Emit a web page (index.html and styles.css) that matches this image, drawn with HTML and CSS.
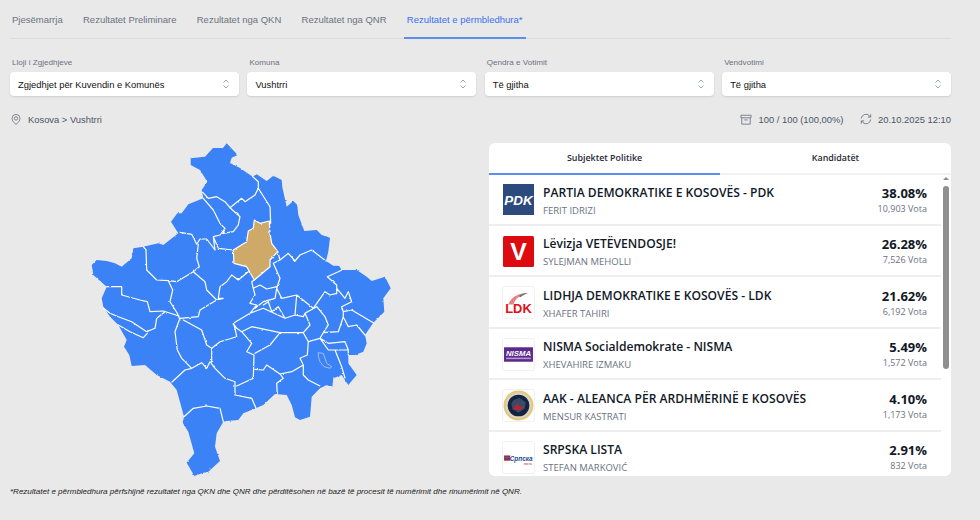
FILE: index.html
```html
<!DOCTYPE html>
<html lang="sq">
<head>
<meta charset="utf-8">
<title>Rezultatet</title>
<link rel="stylesheet" href="styles.css">
</head>
<body>
<div class="page">
  <nav class="tabs">
    <a class="tab">Pjesëmarrja</a>
    <a class="tab">Rezultatet Preliminare</a>
    <a class="tab">Rezultatet nga QKN</a>
    <a class="tab">Rezultatet nga QNR</a>
    <a class="tab active">Rezultatet e përmbledhura*</a>
  </nav>

  <section class="filters">
    <div class="field"><span class="label">Lloji i Zgjedhjeve</span><div class="select"><span>Zgjedhjet për Kuvendin e Komunës</span><svg class="updown" viewBox="0 0 8 12"><path d="M1.500 4.500 4 2l2.500 2.500M1.500 7.500 4 10l2.500-2.500"/></svg></div></div>
    <div class="field"><span class="label">Komuna</span><div class="select"><span>Vushtrri</span><svg class="updown" viewBox="0 0 8 12"><path d="M1.500 4.500 4 2l2.500 2.500M1.500 7.500 4 10l2.500-2.500"/></svg></div></div>
    <div class="field"><span class="label">Qendra e Votimit</span><div class="select"><span>Të gjitha</span><svg class="updown" viewBox="0 0 8 12"><path d="M1.500 4.500 4 2l2.500 2.500M1.500 7.500 4 10l2.500-2.500"/></svg></div></div>
    <div class="field"><span class="label">Vendvotimi</span><div class="select"><span>Të gjitha</span><svg class="updown" viewBox="0 0 8 12"><path d="M1.500 4.500 4 2l2.500 2.500M1.500 7.500 4 10l2.500-2.500"/></svg></div></div>
  </section>

  <section class="status">
    <div class="crumb">
      <svg class="ico pin" viewBox="0 0 12 14"><path d="M6 13C3.500 10.500 1.200 8.500 1.200 5.700a4.800 4.800 0 0 1 9.600 0C10.800 8.500 8.500 10.500 6 13Z"/><circle cx="6" cy="5.700" r="2"/></svg>
      <span>Kosova &gt; Vushtrri</span>
    </div>
    <div class="meta">
      <span class="meta-item"><svg class="ico box" viewBox="0 0 14 13"><path d="M1 1.500h12v3H1zM2 4.500v7.500h10V4.500M5 7h4"/></svg>100 / 100 (100,00%)</span>
      <span class="meta-item"><svg class="ico sync" viewBox="0 0 14 14"><path d="M1.500 6.500A5.500 5.500 0 0 1 11 3.200L12.500 4.800M12.500 1.500v3.300H9.200M12.500 7.500A5.500 5.500 0 0 1 3 10.800L1.500 9.200M1.500 12.500V9.200h3.300"/></svg>20.10.2025 12:10</span>
    </div>
  </section>

  <main class="content">
    <div class="map-col">
      <svg class="map" viewBox="0 140 479 340">
        <defs>
          <filter id="rough" x="-5%" y="-5%" width="110%" height="110%">
            <feTurbulence type="fractalNoise" baseFrequency="0.25" numOctaves="2" seed="4"/>
            <feDisplacementMap in="SourceGraphic" scale="2" xChannelSelector="R" yChannelSelector="G"/>
          </filter>
        </defs>
        <g class="rough-layer">
        <path class="land" d="M190.700 158.300 205 156.700 213 148 223 148 226.700 143.300 237.700 155 231.700 157.700 230 163 240 168 252.700 176.700 256.700 174.300 266.700 181 273.300 175.700 281.700 180 282.300 187 286.700 206.700 293.300 201 297.300 205 298.300 215 304.300 231 316.700 230 321.700 235 330 237.700 328.300 251.700 326 261 333.300 265.700 339 265.700 341.700 270 351.700 270 356.700 270 366.700 276.700 371.700 281 385 276.700 390.700 288.300 383.300 298.300 384.300 311.700 373.300 322.700 365 335 366.700 343.300 363.300 351.700 355 355 348.300 355 348.300 363.300 356.700 375 348.300 385 341.700 375 333.300 378.300 332.300 387.300 326.700 385 320 388.300 311.700 396.700 310 416.700 300 420 295 417.300 291.700 405 286.700 395 275 394 263.300 405 253.300 409.300 243.300 413.300 238.300 420 226.700 421 223.300 421.700 216.700 433.300 215 446.700 220 461 208.300 471.700 203.300 472.700 194.300 476 186.700 462.700 194.300 453.300 188.300 431.700 182.700 422.700 184 416.700 176.700 390 170 381.700 156.700 375 145 365 131.700 366 129.300 355 124 346.700 126.700 340 118.300 325 110 316.700 103.300 306.700 101.700 298.300 106.700 286.700 93.300 275 91.700 265 96.700 260 106.700 261 115 263.300 121.700 266.700 131.700 258.300 133.300 248.300 143.300 246.700 158.300 243.300 163.300 245 178.300 233.300 171 221.700 177.300 213.300 181.700 213.300 188.300 204.300 203.300 198.300 201.700 190 207.300 181.700 200 170 190.700 165Z"/>
        <path class="borders" d="M202.700 192.300 208.300 198.300 216.700 196.700 225 201.700 230 207.700 241.700 198.300 245 201.700 255 195 258.300 188.300 258.300 181.700 252.700 176.700M203.300 198.300 213.300 210 220 223.300 225 228.300 220 235 213.300 236.700 218.300 248.300 233.300 250M230 207.700 240 216.700 238.300 225 233.300 231.700 223.300 233.300 225 228.300M258.300 188.300 270 206.700 270.700 223.300M180 232.300 191.700 234.300 196.700 244.300 200 239 206.700 239 215 250 213.300 236.700M198.300 244.300 196.700 258.300 199.300 266.700 193.300 271.700 185 276.700 176.700 281.700 168.300 280.700 156.700 280 146.700 270 146 250 143.300 246.700M193.300 271.700 205 281.700 206.700 290 216.700 300 223.300 298.300 218.300 298.300 220 286.700 226.700 281.700 231.700 275 238.300 280 248.300 271.700M216.700 300 200 310 198.300 316.700 180 318.300M168.300 280.700 172.700 290 170 301.700 177.300 313.300 180 320M106.700 286.700 121.700 286.700 121.700 295 140 300 147.300 301.700 150 311.700 163.300 311 179 316M103.300 308 110 313.300 118.300 316.700 131.700 321.700 146.700 331.700 155 328.300 156.700 318.300 165 311.700M118.300 325 130 331.700 143.300 337.700 147.300 333.300M179.300 320 175 331.700 177.300 350 181.700 358.300 191.700 368.300 185 370 171.700 382.300M191.700 368.300 201.700 362.700 206.700 368.300 210 361.700 215 368.300 225 378.300 235 381.700 235 395 251.700 398.300 256 408.300M183.300 320 201.700 330 206.700 345 211.700 348.300 211.700 361.700M211.700 348.300 220 341.700 236.700 336.700 235 328.300 233.300 323.300M184 416.700 193.300 408.300 206.700 406 220 408.300 223.300 421.700M236.700 386 253.300 378.300 254 355 246.700 351.700 251.700 343.300 241.700 331.700 236.700 328.300 233.300 323.300 250 313.300 256.700 305 250 303.300 255 295 253.300 288.300 251.700 281.700 254.300 280M241.700 331.700 251.700 326.700 280 332.700 303.300 332.700 308.300 341.700 320 338.300 328.300 343.300 345 341.700 348.300 350 335 350 341.700 366.700 345 378M280 332.700 270 345 255 353.300M308.300 341.700 307.300 355 300 358.300 303.300 365 291.700 371.700 280 374 266.700 365 263.300 370 255 369.300M280 374 283.300 378.300 276.700 383.300 277.300 394M303.300 365 303.300 375 308.300 380 320 386M320 338.300 328.300 350 335 350M348.300 350 348.300 355M253.300 288.300 260 285 266.700 289 276.700 286.700M277.700 251.700 280 260 273.300 263.300 280 278.300 276.700 288.300 281.700 298.300 296.700 295 313.300 308.300 325 291.700 330 295 336.700 293.300 336.700 285 327.300 276.700 338.300 271.700 341.700 270M280 260 288.300 253.300 295 261 300 255 311.700 250 326 261M336.700 288.300 345 298.300 348.300 291.700 351.700 301.700 341.700 306.700 343.300 311.700 351.700 310 373.300 322.700M255 308.300 263.300 301.700 275 298.300 276.700 288.300M263.300 305 268.300 301.700 271.700 311.700 278.300 306.700 285 318.300 295 315 296.700 295M295 315 303.300 316.700 305 313.300 316.700 306.700 325 316.700 328.300 325 323.300 332.700 320 338.300M305 313.300 310 325 303.300 332.700M323.300 332.700 338.300 331.700 343.300 316.700 348.300 326.700 356.700 325 365 335M263.300 308.300 285 318.300M263.300 308.300 250 313.300M343.300 311.700 343.300 316.700"/>
        <path class="lake" d="M318.300 352.700 323.300 353.300 326.700 363.300 331.700 366.700 330 368.300 324 366.700 320 361.700 318.300 356.700Z"/>
        <path class="selected" d="M254.300 220 260 223.300 269.300 221 270 233.300 271.700 243.300 277.700 251.700 270 260 270 266.700 254.300 280 246.700 266.700 234 263.300 233.300 250 246.700 241.700 248.300 231 253.300 228.300Z"/>
        </g>
      </svg>
    </div>

    <div class="card">
      <div class="card-tabs">
        <div class="card-tab on">Subjektet Politike</div>
        <div class="card-tab">Kandidatët</div>
      </div>
      <div class="list-wrap">
        <ul class="list">
          <li class="row">
            <svg class="logo" viewBox="0 0 30 30"><rect width="30" height="30" fill="#2d4a7e"/><text x="15" y="20" class="t-pdk">PDK</text></svg>
            <div class="who"><div class="name">PARTIA DEMOKRATIKE E KOSOVËS - PDK</div><div class="person">FERIT IDRIZI</div></div>
            <div class="nums"><div class="pct">38.08%</div><div class="votes">10,903 Vota</div></div>
          </li>
          <li class="row">
            <svg class="logo" viewBox="0 0 30 30"><rect width="30" height="30" rx="1.500" fill="#dd0a0f"/><text x="15" y="23" class="t-v">V</text></svg>
            <div class="who"><div class="name">Lëvizja VETËVENDOSJE!</div><div class="person">SYLEJMAN MEHOLLI</div></div>
            <div class="nums"><div class="pct">26.28%</div><div class="votes">7,526 Vota</div></div>
          </li>
          <li class="row">
            <svg class="logo framed" viewBox="0 0 30 30"><path d="M5 17C8 10 14 6 23 6 16 8 12 11 10 17Z" fill="#e98080"/><path d="M15 9c3-2.500 6-3.500 9-3-3 1-5 2-7 4Z" fill="#777"/><text x="15" y="25.500" class="t-ldk">LDK</text></svg>
            <div class="who"><div class="name">LIDHJA DEMOKRATIKE E KOSOVËS - LDK</div><div class="person">XHAFER TAHIRI</div></div>
            <div class="nums"><div class="pct">21.62%</div><div class="votes">6,192 Vota</div></div>
          </li>
          <li class="row">
            <svg class="logo framed" viewBox="0 0 30 30"><rect x="1" y="8" width="28" height="14" fill="#5b2a8c"/><text x="15" y="16.500" class="t-nisma">NISMA</text><rect x="3" y="18" width="24" height="1.500" fill="#b79ad0"/></svg>
            <div class="who"><div class="name">NISMA Socialdemokrate - NISMA</div><div class="person">XHEVAHIRE IZMAKU</div></div>
            <div class="nums"><div class="pct">5.49%</div><div class="votes">1,572 Vota</div></div>
          </li>
          <li class="row">
            <svg class="logo framed" viewBox="0 0 30 30"><circle cx="15" cy="15" r="14.500" fill="#e5c772"/><circle cx="15" cy="15" r="12.500" fill="#d8d4c8"/><circle cx="15" cy="15" r="10.500" fill="#14233f"/><path d="M10 10 16 7.500 22 12 21 18 15 22 9 18 8 13Z" fill="#3a4a68"/><path d="M9 19 14 13 17 17 21 15 18 19Z" fill="#b5262c"/></svg>
            <div class="who"><div class="name">AAK - ALEANCA PËR ARDHMËRINË E KOSOVËS</div><div class="person">MENSUR KASTRATI</div></div>
            <div class="nums"><div class="pct">4.10%</div><div class="votes">1,173 Vota</div></div>
          </li>
          <li class="row">
            <svg class="logo framed" viewBox="0 0 30 30"><rect x="1" y="13" width="6" height="1.700" fill="#c8202a"/><rect x="1" y="14.700" width="6" height="1.700" fill="#1d4a96"/><rect x="1" y="16.400" width="6" height="1.700" fill="#c8202a"/><text x="6.500" y="18" class="t-srp">Српска</text><text x="20" y="22" class="t-srp2">листа</text></svg>
            <div class="who"><div class="name">SRPSKA LISTA</div><div class="person">STEFAN MARKOVIĆ</div></div>
            <div class="nums"><div class="pct">2.91%</div><div class="votes">832 Vota</div></div>
          </li>
        </ul>
        <div class="scrollbar"><span class="arrow"></span><span class="thumb"></span></div>
      </div>
    </div>
  </main>

  <p class="note">*Rezultatet e përmbledhura përfshijnë rezultatet nga QKN dhe QNR dhe përditësohen në bazë të procesit të numërimit dhe rinumërimit në QNR.</p>
</div>
</body>
</html>
```
FILE: styles.css
```css
* { box-sizing: border-box; }
html, body { margin: 0; padding: 0; }
body { background: #e9e9e9; font-family: "Liberation Sans", Arial, sans-serif; width: 980px; height: 520px; overflow: hidden; color: #111827; }
.page { padding: 0 29px 0 10px; }

.tabs { display: flex; gap: 14.300px; height: 39px; border-bottom: 1px solid #dcdcdc; }
.tab { padding: 13px 3px 0; height: 39px; font-size: 9.500px; line-height: 14px; color: #6b7280; }
.tab:first-child { padding-left: 2px; }
.tab.active { color: #3b6ff0; border-bottom: 2px solid #5b8ff0; }

.filters { display: grid; grid-template-columns: repeat(4, 1fr); column-gap: 8.500px; margin-top: 19px; }
.field { display: flex; flex-direction: column; }
.label { font-size: 8.100px; line-height: 10px; color: #6b7280; padding-left: 2px; margin-bottom: 4px; }
.select { height: 24px; background: #fff; border-radius: 4px; box-shadow: 0 1px 2px rgba(0,0,0,.12); display: flex; align-items: center; justify-content: space-between; padding: 0 9px 0 8px; font-size: 9.400px; color: #111; }
.updown { width: 8px; height: 12px; }
.updown path { fill: none; stroke: #9ca3af; stroke-width: 1; }

.status { display: flex; justify-content: space-between; align-items: center; margin-top: 14px; height: 18px; font-size: 9.400px; color: #4b5563; }
.crumb, .meta, .meta-item { display: flex; align-items: center; }
.crumb { padding-left: 1px; gap: 7px; }
.meta { gap: 16px; }
.meta-item { gap: 6.500px; }
.ico { fill: none; stroke: #6b7280; stroke-width: 1; }
.pin { width: 10px; height: 13px; }
.box { width: 12px; height: 11px; }
.sync { width: 12px; height: 12px; }

.content { display: flex; height: 333px; margin-top: 15px; }
.map-col { width: 479px; margin-top: -3px; flex: none; }
.map { display: block; width: 479px; height: 340px; margin-left: -10px; }
.rough-layer { filter: url(#rough); }
.land { fill: #3b82f6; }
.borders { fill: none; stroke: #fff; stroke-width: 1.200; stroke-linejoin: round; stroke-linecap: round; }
.lake { fill: #3b82f6; stroke: #b9cdf0; stroke-width: .8; }
.selected { fill: #cfa968; stroke: #fff; stroke-width: 1.200; stroke-linejoin: round; }

.card { width: 462px; flex: none; background: #fff; border-radius: 6px; overflow: hidden; display: flex; flex-direction: column; }
.card-tabs { display: grid; grid-template-columns: 231px 231px; height: 31px; flex: none; }
.card-tab { font-family: "Open Sans", sans-serif; font-weight: 600; font-size: 8.900px; line-height: 30px; text-align: center; color: #1f2937; border-bottom: 2px solid #f1f1f1; }
.card-tab.on { border-bottom-color: #5b8ff0; }

.list-wrap { flex: 1; min-height: 0; display: flex; }
.list { list-style: none; margin: 0; padding: 0; width: 452px; flex: none; overflow: hidden; }
.row { display: flex; align-items: center; height: 51.500px; padding: 2px 14px 0; border-bottom: 2px solid #eeeeee; }
.logo { width: 31px; height: 31px; flex: none; margin-right: 9px; }
.logo.framed { outline: 1px solid #f1f1f1; border-radius: 2px; }
.who { flex: 1; min-width: 0; padding-top: 2px; }
.name { font-family: "Open Sans", sans-serif; font-weight: 600; font-size: 12.100px; line-height: 16px; color: #111827; }
.person { font-family: "Open Sans", sans-serif; font-size: 9.500px; line-height: 12px; margin-top: 4px; color: #6b7280; }
.nums { text-align: right; }
.pct { font-family: "Open Sans", sans-serif; font-weight: 700; font-size: 13px; line-height: 16px; color: #111827; }
.votes { font-family: "Open Sans", sans-serif; font-size: 9px; line-height: 12px; margin-top: 2px; color: #6b7280; }

.scrollbar { width: 10px; flex: none; position: relative; display: flex; flex-direction: column; align-items: center; padding-top: 3px; }
.arrow { width: 0; height: 0; border-left: 3px solid transparent; border-right: 3px solid transparent; border-bottom: 3px solid #8c8c8c; }
.thumb { width: 6px; height: 183px; background: #8f8f8f; border-radius: 3px; margin-top: 6px; }

.t-pdk { font: italic 700 13px "Liberation Sans", sans-serif; fill: #fff; text-anchor: middle; }
.t-v { font: 900 24px "Liberation Sans", sans-serif; fill: #fff; text-anchor: middle; }
.t-ldk { font: 700 12.500px "Liberation Sans", sans-serif; fill: #e0101a; text-anchor: middle; }
.t-nisma { font: italic 700 7.500px "Liberation Sans", sans-serif; fill: #fff; text-anchor: middle; }
.t-srp { font: italic 700 6.200px "Liberation Sans", sans-serif; fill: #1d4a96; }
.t-srp2 { font: 3px "Liberation Sans", sans-serif; fill: #c8202a; }

.note { margin: 10px 0 0; font-size: 8.030px; line-height: 11px; font-style: italic; color: #222; }
```
